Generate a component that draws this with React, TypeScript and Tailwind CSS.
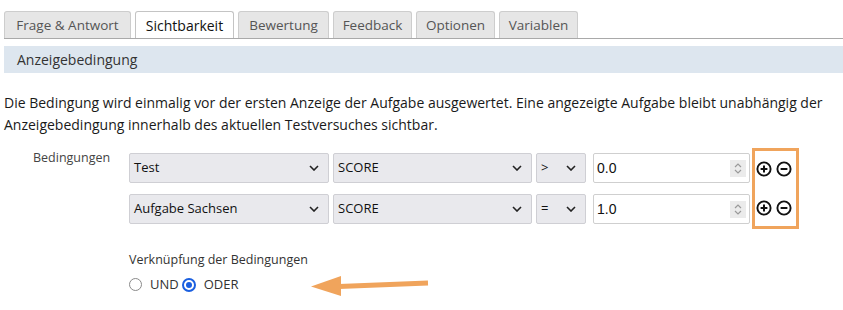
import React from "react";

const tabs = [
  { label: "Frage & Antwort", w: "w-[127px]" },
  { label: "Sichtbarkeit", w: "w-[99px]" },
  { label: "Bewertung", w: "w-[91px]" },
  { label: "Feedback", w: "w-[79px]" },
  { label: "Optionen", w: "w-[79px]" },
  { label: "Variablen", w: "w-[79px]" },
];

function Chevron() {
  return (
    <svg width="10" height="6" viewBox="0 0 10 6" className="shrink-0">
      <polyline points="1,1 5,5 9,1" fill="none" stroke="#222" strokeWidth="1.6" />
    </svg>
  );
}

function Select({ value, width }: { value: string; width: string }) {
  return (
    <div
      className={`${width} flex h-[30px] items-center justify-between rounded-[2px] border border-[#cfcfd4] bg-[#e9e9ed] pl-[4px] pr-[9px] text-[13px] text-[#111]`}
    >
      <span>{value}</span>
      <Chevron />
    </div>
  );
}

function NumberInput({ value }: { value: string }) {
  return (
    <div className="flex h-[30px] w-[157px] items-center justify-between rounded-[2px] border border-[#cfcfcf] bg-white pl-[3px] pr-[3px] font-['Liberation_Sans',sans-serif] text-[14px] text-[#111]">
      <span>{value}</span>
      <div className="flex h-[17px] w-[16px] flex-col items-center justify-center gap-[1px] bg-[#ebebeb]">
        <svg width="8" height="5" viewBox="0 0 8 5">
          <polyline points="1,4 4,1 7,4" fill="none" stroke="#9a9a9a" strokeWidth="1.2" />
        </svg>
        <svg width="8" height="5" viewBox="0 0 8 5">
          <polyline points="1,1 4,4 7,1" fill="none" stroke="#9a9a9a" strokeWidth="1.2" />
        </svg>
      </div>
    </div>
  );
}

function CircleIcon({ plus }: { plus?: boolean }) {
  return (
    <svg width="16" height="16" viewBox="0 0 16 16">
      <circle cx="8" cy="8" r="6.6" fill="none" stroke="#111" strokeWidth="1.9" />
      <line x1="4.6" y1="8" x2="11.4" y2="8" stroke="#111" strokeWidth="2" />
      {plus && <line x1="8" y1="4.6" x2="8" y2="11.4" stroke="#111" strokeWidth="2" />}
    </svg>
  );
}

const rows = [
  { a: "Test", b: "SCORE", op: ">", v: "0.0" },
  { a: "Aufgabe Sachsen", b: "SCORE", op: "=", v: "1.0" },
];

export default function App() {
  return (
    <div className="relative h-[310px] w-[843px] overflow-hidden bg-white font-['Open_Sans',sans-serif] text-[#222]">
      <div className="ml-[4px] flex gap-[4px] border-b border-[#a9a9a9] pt-[11px]">
        {tabs.map((t) => (
          <div
            key={t.label}
            className={
              t.label === "Sichtbarkeit"
                ? `${t.w} flex h-[27px] items-center justify-center whitespace-nowrap rounded-t-[3px] border border-b-0 border-[#c4c4c4] bg-white text-[14px] text-[#111]`
                : `${t.w} flex h-[27px] items-center justify-center whitespace-nowrap rounded-t-[3px] border border-b-0 border-[#cdcdcd] bg-[#e6e6e6] text-[13.5px] text-[#555]`
            }
          >
            {t.label}
          </div>
        ))}
      </div>

      <div className="ml-[4px] mt-[7px] flex h-[27px] items-center bg-[#dde6ef] pl-[13px] text-[14px] text-[#333]">
        Anzeigebedingung
      </div>

      <p className="mt-[19px] px-[4px] text-[14px] leading-[22px] text-[#1a1a1a]">
        Die Bedingung wird einmalig vor der ersten Anzeige der Aufgabe ausgewertet. Eine angezeigte Aufgabe bleibt
        unabhängig der Anzeigebedingung innerhalb des aktuellen Testversuches sichtbar.
      </p>

      <div className="mt-[12px] flex items-start">
        <div className="w-[129px] pl-[33px] pt-[1px] text-[12.5px] text-[#444]">Bedingungen</div>
        <div className="flex items-center">
          <div className="flex flex-col gap-[11px]">
            {rows.map((r) => (
              <div key={r.a} className="flex items-center">
                <Select value={r.a} width="w-[200px]" />
                <div className="ml-[4px]">
                  <Select value={r.b} width="w-[199px]" />
                </div>
                <div className="ml-[4px]">
                  <Select value={r.op} width="w-[50px]" />
                </div>
                <div className="ml-[7px]">
                  <NumberInput value={r.v} />
                </div>
              </div>
            ))}
          </div>
          <div className="ml-[2px] flex h-[81px] w-[47px] flex-col justify-between border-[3px] border-[#f0a45c] py-[10px] pl-[1px]">
            <div className="flex gap-[4px]">
              <CircleIcon plus />
              <CircleIcon />
            </div>
            <div className="flex gap-[4px]">
              <CircleIcon plus />
              <CircleIcon />
            </div>
          </div>
        </div>
      </div>

      <div className="ml-[129px] mt-[22px] text-[12.5px] text-[#333]">Verknüpfung der Bedingungen</div>
      <div className="ml-[129px] mt-[5px] flex items-center text-[13px] text-[#333]">
        <span className="h-[13px] w-[13px] rounded-full border-[1.5px] border-[#8a8a8a]" />
        <span className="ml-[8px]">UND</span>
        <span className="ml-[3px] flex h-[14px] w-[14px] items-center justify-center rounded-full border-[2px] border-[#1a5fe0]">
          <span className="h-[6px] w-[6px] rounded-full bg-[#1a5fe0]" />
        </span>
        <span className="ml-[8px]">ODER</span>
      </div>

      <svg className="absolute left-[305px] top-[270px]" width="130" height="32" viewBox="0 0 130 32">
        <line x1="34" y1="16.5" x2="123" y2="13" stroke="#f0a45c" strokeWidth="5" />
        <polygon points="6,16.5 36,6 36,26" fill="#f0a45c" />
      </svg>
    </div>
  );
}
